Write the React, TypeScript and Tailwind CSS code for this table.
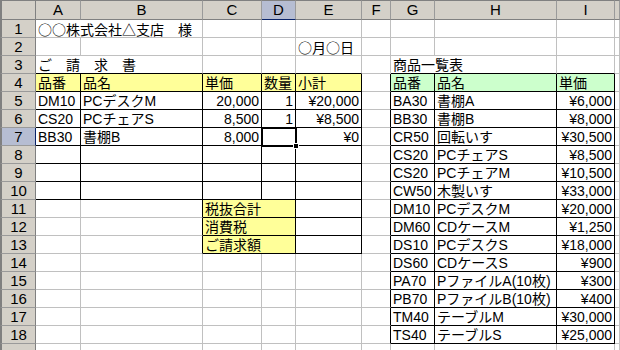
import React from "react";

// Sheet types
type Fill = "yellow" | "green";

interface Cell {
  text?: string;
  span?: number; // only 1 or 2 used
  align?: "left" | "right";
  fill?: Fill;
  r?: boolean; // black right border
  b?: boolean; // black bottom border
  hideR?: boolean; // filled cell hides the gridline
  cjk?: boolean; // full-width symbols need the CJK face
  selected?: boolean;
}

type Row = Record<string, Cell>;

const COLS = ["A", "B", "C", "D", "E", "F", "G", "H", "I", "J"];
const SELECTED_COL = "D";
const SELECTED_ROW = 7;
const VISIBLE_ROWS = 18;

// Price list on the right
const products: [string, string, string][] = [
  ["BA30", "書棚A", "¥6,000"],
  ["BB30", "書棚B", "¥8,000"],
  ["CR50", "回転いす", "¥30,500"],
  ["CS20", "PCチェアS", "¥8,500"],
  ["CS20", "PCチェアM", "¥10,500"],
  ["CW50", "木製いす", "¥33,000"],
  ["DM10", "PCデスクM", "¥20,000"],
  ["DM60", "CDケースM", "¥1,250"],
  ["DS10", "PCデスクS", "¥18,000"],
  ["DS60", "CDケースS", "¥900"],
  ["PA70", "PファイルA(10枚)", "¥300"],
  ["PB70", "PファイルB(10枚)", "¥400"],
  ["TM40", "テーブルM", "¥30,000"],
  ["TS40", "テーブルS", "¥25,000"],
];

// Invoice lines
const lines: [string, string, string, string, string][] = [
  ["DM10", "PCデスクM", "20,000", "1", "¥20,000"],
  ["CS20", "PCチェアS", "8,500", "1", "¥8,500"],
  ["BB30", "書棚B", "8,000", "", "¥0"],
  ["", "", "", "", ""],
  ["", "", "", "", ""],
  ["", "", "", "", ""],
];

function buildRows(): Row[] {
  const rows: Row[] = [];
  for (let n = 1; n <= 19; n++) rows.push({});
  const at = (n: number) => rows[n - 1];

  at(1).A = { text: "○○株式会社△支店　様", span: 2, cjk: true };
  at(2).E = { text: "○月○日", cjk: true };
  at(3).A = { text: "ご　請　求　書", span: 2, b: true };
  at(3).C = { b: true };
  at(3).D = { b: true };
  at(3).E = { b: true };
  at(3).G = { text: "商品一覧表", span: 2, b: true };
  at(3).I = { b: true };

  // invoice header
  ["品番", "品名", "単価", "数量", "小計"].forEach((t, i) => {
    at(4)[COLS[i]] = { text: t, fill: "yellow", r: true, b: true };
  });
  lines.forEach((line, i) => {
    const n = 5 + i;
    line.forEach((t, j) => {
      at(n)[COLS[j]] = {
        text: t,
        align: j >= 2 ? "right" : "left",
        r: true,
        b: true,
        selected: n === SELECTED_ROW && COLS[j] === SELECTED_COL,
      };
    });
  });

  // totals
  ["税抜合計", "消費税", "ご請求額"].forEach((t, i) => {
    const n = 11 + i;
    at(n).B = { r: true };
    at(n).C = { text: t, span: 2, fill: "yellow", r: true, b: true };
    at(n).E = { r: true, b: true };
  });

  // price list
  ["品番", "品名", "単価"].forEach((t, i) => {
    at(4)[COLS[6 + i]] = { text: t, fill: "green", r: true, b: true };
  });
  products.forEach(([code, name, price], i) => {
    const n = 5 + i;
    at(n).G = { text: code, r: true, b: true };
    at(n).H = { text: name, r: true, b: true };
    at(n).I = { text: price, align: "right", r: true, b: true };
  });
  for (let n = 4; n <= 18; n++) at(n).F = { r: true };

  return rows;
}

const rows = buildRows();

function cellClass(c: Cell) {
  return [
    "h-[18px] border-r border-b px-[2px] pt-px leading-[16px] whitespace-nowrap text-[14px] text-black",
    c.align === "right" ? "text-right" : "text-left",
    c.fill === "yellow" ? "bg-[#ffff99]" : c.fill === "green" ? "bg-[#ccffcc]" : "bg-white",
    c.r ? "border-r-black" : c.hideR ? "border-r-transparent" : "border-r-[#c0c0c0]",
    c.b ? "border-b-black" : "border-b-[#c0c0c0]",
    c.span === 2 ? "col-span-2" : "",
    c.cjk ? "font-['Noto_Sans_CJK_JP',sans-serif]" : "",
    c.selected ? "relative" : "",
  ].join(" ");
}

function SheetCell({ cell }: { cell: Cell }) {
  return (
    <div className={cellClass(cell)}>
      {cell.text}
      {cell.selected && (
        <>
          <div className="absolute -left-px -top-px -right-[2px] -bottom-[2px] border-2 border-black" />
          <div className="absolute -right-[4px] -bottom-[4px] w-[6px] h-[6px] bg-black border border-white z-10" />
        </>
      )}
    </div>
  );
}

export default function App() {
  return (
    <div className="w-[620px] h-[350px] overflow-hidden bg-white font-['Liberation_Sans','Noto_Sans_CJK_JP',sans-serif]">
      <div className="grid grid-cols-[36px_45px_122px_59px_34px_66px_29px_44px_122px_58px_1fr]">
        {/* column headers */}
        <div className="h-[20px] border-t border-l-2 border-r border-b border-[#808080] bg-[#d4d0c8]" />
        {COLS.map((col) => (
          <div
            key={col}
            className={`h-[20px] border-t border-t-[#808080] border-r border-r-[#9a9a9a] border-b text-center text-[15px] leading-[18px] text-black ${
              col === SELECTED_COL
                ? "bg-[#b6bdd2] border-b-[#0a246a]"
                : "bg-[#d4d0c8] border-b-[#808080]"
            }`}
          >
            {col === "J" ? "" : col}
          </div>
        ))}

        {/* rows; the last one is only a sliver at the window's edge */}
        {rows.map((row, i) => {
          const n = i + 1;
          const cells: React.ReactNode[] = [];
          let skip = 0;
          COLS.forEach((col) => {
            if (skip > 0) {
              skip--;
              return;
            }
            const cell = row[col] ?? {};
            if (cell.span === 2) skip = 1;
            cells.push(<SheetCell key={col} cell={cell} />);
          });
          return (
            <React.Fragment key={n}>
              <div
                className={`h-[18px] border-l-2 border-l-[#808080] border-r border-b border-b-[#9a9a9a] pt-px text-center text-[15px] leading-[16px] text-black ${
                  n === SELECTED_ROW
                    ? "bg-[#b6bdd2] border-r-[#0a246a]"
                    : "bg-[#d4d0c8] border-r-[#808080]"
                }`}
              >
                {n <= VISIBLE_ROWS ? n : ""}
              </div>
              {cells}
            </React.Fragment>
          );
        })}
      </div>
    </div>
  );
}
